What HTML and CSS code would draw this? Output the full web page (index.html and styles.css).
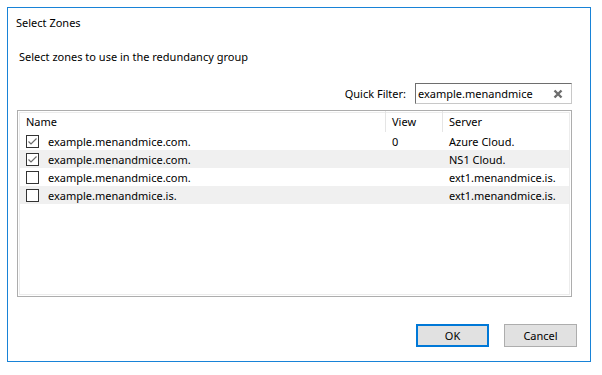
FILE: index.html
```html
<!DOCTYPE html>
<html lang="en">
<head>
  <meta charset="UTF-8" />
  <title>Select Zones</title>
  <link rel="stylesheet" href="styles.css">
</head>
<body>
  <div class="dialog">
    <div class="title">Select Zones</div>
    <div class="intro">Select zones to use in the redundancy group</div>

    <div class="filter">
      <span class="filter-label">Quick Filter:</span>
      <div class="filter-box">
        <span class="filter-text">example.menandmice</span>
        <svg class="clear" width="10" height="10" viewBox="0 0 10 10">
          <path d="M1.5 1.5 L8.5 8.5 M8.5 1.5 L1.5 8.5" stroke="#6d6d6d" stroke-width="2.4" />
        </svg>
      </div>
    </div>

    <div class="list">
      <div class="list-head">
        <span class="col-name">Name</span>
        <span class="col-view">View</span>
        <span class="col-server">Server</span>
      </div>

      <div class="row">
        <span class="col-name">
          <svg class="check" width="13" height="13" viewBox="0 0 13 13">
            <rect x="0.5" y="0.5" width="12" height="12" fill="#fff" stroke="#333" />
            <path d="M2.5 6.5 L5 9 L10.5 3.5" fill="none" stroke="#6b6b6b" stroke-width="1.2" />
          </svg>
          example.menandmice.com.
        </span>
        <span class="col-view">0</span>
        <span class="col-server">Azure Cloud.</span>
      </div>
      <div class="row alt">
        <span class="col-name">
          <svg class="check" width="13" height="13" viewBox="0 0 13 13">
            <rect x="0.5" y="0.5" width="12" height="12" fill="#fff" stroke="#333" />
            <path d="M2.5 6.5 L5 9 L10.5 3.5" fill="none" stroke="#6b6b6b" stroke-width="1.2" />
          </svg>
          example.menandmice.com.
        </span>
        <span class="col-view"></span>
        <span class="col-server">NS1 Cloud.</span>
      </div>
      <div class="row">
        <span class="col-name">
          <svg class="check" width="13" height="13" viewBox="0 0 13 13">
            <rect x="0.5" y="0.5" width="12" height="12" fill="#fff" stroke="#333" />
          </svg>
          example.menandmice.com.
        </span>
        <span class="col-view"></span>
        <span class="col-server">ext1.menandmice.is.</span>
      </div>
      <div class="row alt">
        <span class="col-name">
          <svg class="check" width="13" height="13" viewBox="0 0 13 13">
            <rect x="0.5" y="0.5" width="12" height="12" fill="#fff" stroke="#333" />
          </svg>
          example.menandmice.is.
        </span>
        <span class="col-view"></span>
        <span class="col-server">ext1.menandmice.is.</span>
      </div>
    </div>

    <div class="actions">
      <button class="btn btn-primary">OK</button>
      <button class="btn">Cancel</button>
    </div>
  </div>
</body>
</html>
```

FILE: styles.css
```css
body {
  margin: 0;
  padding: 7px;
  background-color: #fff;
  font-family: 'Noto Sans', 'Open Sans', sans-serif;
  font-size: 11px;
  color: #000;
}

.dialog {
  border: 1px solid #1883d7;
  padding: 0 18px 14px 9px;
  box-sizing: border-box;
  width: 584px;
  height: 355px;
  display: flex;
  flex-direction: column;
}

.title {
  margin-top: 7px;
  margin-left: -1px;
  line-height: 16px;
}

.intro {
  margin-top: 18px;
  padding-left: 2px;
  line-height: 16px;
}

.filter {
  margin-top: 18px;
  display: flex;
  justify-content: flex-end;
  align-items: center;
  gap: 9px;
}

.filter-label {
  line-height: 16px;
}

.filter-box {
  width: 157px;
  height: 21px;
  box-sizing: border-box;
  border: 1px solid #c8c8c8;
  border-top-color: #6e6e6e;
  border-left-color: #6e6e6e;
  display: flex;
  align-items: center;
  justify-content: space-between;
  padding: 0 8px 0 2px;
}

.clear {
  display: block;
}

.list {
  margin-top: 6px;
  height: 187px;
  box-sizing: border-box;
  border: 1px solid #adadad;
  box-shadow: inset 0 0 0 1px #fff, inset 0 0 0 2px #ececec;
  padding: 0 2px;
}

.list-head,
.row {
  display: flex;
  align-items: center;
}

.list-head {
  height: 21px;
}

.row {
  height: 18px;
}

.row.alt {
  background-color: #f0f0f0;
}

.col-name {
  width: 359px;
  flex-shrink: 0;
  padding-left: 6px;
  display: flex;
  align-items: center;
  gap: 9px;
}

.col-view {
  width: 50px;
  flex-shrink: 0;
  padding-left: 7px;
}

.col-server {
  flex: 1;
  min-width: 0;
  padding-left: 7px;
  white-space: nowrap;
}

.list-head .col-view,
.list-head .col-server {
  align-self: stretch;
  display: flex;
  align-items: center;
  border-left: 1px solid #e5e5e5;
  padding-left: 6px;
}

.check {
  display: block;
  flex-shrink: 0;
}

.actions {
  margin-top: auto;
  display: flex;
  justify-content: flex-end;
  gap: 15px;
  margin-right: -5px;
}

.btn {
  width: 73px;
  height: 23px;
  box-sizing: border-box;
  font-family: inherit;
  font-size: 11px;
  background-color: #e1e1e1;
  border: 1px solid #adadad;
  padding: 0;
  color: #000;
}

.btn-primary {
  border: 2px solid #0078d7;
}
```
